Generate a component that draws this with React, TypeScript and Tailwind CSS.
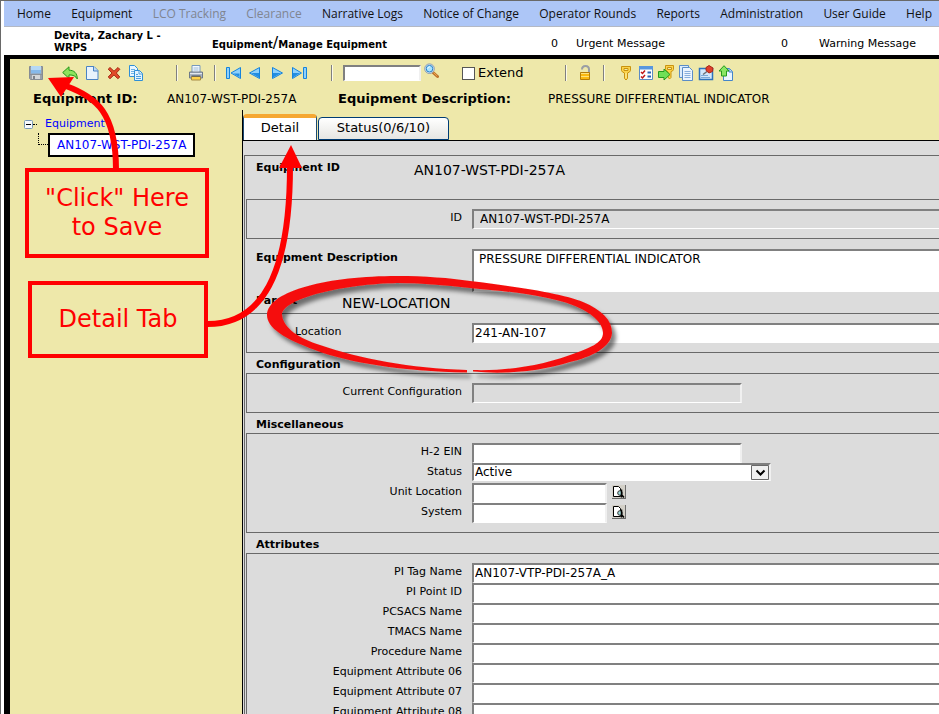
import React from "react";

type IconName =
  | "save" | "undo" | "new" | "delete" | "copy" | "print"
  | "first" | "prev" | "next" | "last" | "search" | "lock"
  | "key" | "checklist" | "keyArrow" | "docs" | "pin" | "export" | "lookup";

const blueStroke = { fill: "#8ed0fb", stroke: "#1583dc", strokeWidth: 1, strokeLinejoin: "round" as const };

const drawings: Record<IconName, React.ReactNode> = {
  save: (
    <>
      <path d="M1.500 1.500h13v13h-12l-1-1z" fill="#9aa0a8" stroke="#858b94" />
      <path d="M3 1h10v7H3z" fill="#b5d8f6" />
      <path d="M3 5h10v3.500H3z" fill="#86b9ea" />
      <path d="M2 9.500h12" stroke="#8b9097" />
      <path d="M4 10h8v4H4z" fill="#d3d6d9" />
      <path d="M5 11h2v3H5z" fill="#7d8289" />
    </>
  ),
  undo: (
    <path d="M.7 7.500 7 1.800v3.400c5 0 8.300 2.800 8.300 8.800-1.500-2.600-3.800-4.200-8.300-4.100v3.500z" fill="#8ee35c" stroke="#25961a" strokeLinejoin="round" />
  ),
  new: (
    <>
      <path d="M2.500 1.500h7.500l4 4v9H2.500z" fill="#e9f3fd" stroke="#4a83c4" />
      <path d="M9.500 1.500V6H14" fill="#bfdaf5" stroke="#4a83c4" />
    </>
  ),
  delete: (
    <path d="m4 2.500 4 3.700 4-3.700 1.800 1.800L10.300 8l3.500 4-2 1.700L8 9.900 4 13.700 2.200 12 6 8 2.200 4.200z" fill="#e24a2a" stroke="#a82a14" />
  ),
  copy: (
    <>
      <path d="M1.500.5h5l3 3v8h-8z" fill="#e9f6ff" stroke="#2f8fd6" />
      <path d="M3 4.500h4M3 6.500h4M3 8.500h3" stroke="#6db2e6" />
      <path d="M6.500 5.500h5l3 3v7h-8z" fill="#e3f3ff" stroke="#2f8fd6" />
      <path d="M11 5.500V9h3.500M8 9.500h2M8 11.500h5M8 13.500h5" stroke="#4f9fdb" fill="none" />
    </>
  ),
  print: (
    <>
      <path d="M4 .5h8v7H4z" fill="#f3f9ff" stroke="#7598bd" />
      <path d="M5.500 3h5M5.500 5h5" stroke="#9dbad7" />
      <path d="M1.500 7h13v6h-13z" fill="#a9b4c2" stroke="#6d7989" />
      <path d="M2 8.500h12" stroke="#e2e7ee" />
      <path d="M3.500 11.500h9v3.500h-9z" fill="#ffd24a" stroke="#a58a44" />
      <path d="M3.500 11h9" stroke="#455163" />
    </>
  ),
  first: (
    <>
      <path d="M1.500 2.500h3v11h-3z" {...blueStroke} />
      <path d="M15.500 2.500v11L6 8z" {...blueStroke} />
      <path d="M14.500 8.500v3.500L8 8.500z" fill="#218de2" />
    </>
  ),
  prev: (
    <>
      <path d="M12.500 2.500v11L2.500 8z" {...blueStroke} />
      <path d="M12 8v4.500L4 8z" fill="#218de2" />
    </>
  ),
  next: (
    <>
      <path d="M3.500 2.500v11l10-5.500z" {...blueStroke} />
      <path d="M4 8v4.500L12 8z" fill="#218de2" />
    </>
  ),
  last: (
    <>
      <path d="M1.500 2.500v11L10.500 8z" {...blueStroke} />
      <path d="M2 8v4.500L9 8z" fill="#218de2" />
      <path d="M12.500 2.500h3v11h-3z" {...blueStroke} />
    </>
  ),
  search: (
    <>
      <path d="m10 9.500 4.500 4" stroke="#bd742c" strokeWidth="3" strokeLinecap="round" />
      <path d="m10.500 9.500 3.700 3.500" stroke="#f1a94f" strokeWidth="1" />
      <circle cx="6.500" cy="5.700" r="4.800" fill="#d8e5f1" stroke="#8a9db4" />
      <circle cx="6.500" cy="5.700" r="3.300" fill="#a9e3ff" stroke="#2584cb" />
      <path d="M4.800 5.500c.2-1.200 1-1.700 2-1.700" stroke="#fff" fill="none" />
    </>
  ),
  lock: (
    <>
      <path d="M5 4.500C5 1.800 6.500 1 8.500 1s3.500 1 3.500 3.500V8" fill="none" stroke="#9a9ea4" strokeWidth="2" />
      <path d="M3.500 7.500h9v7h-9z" fill="#fbb90f" stroke="#b57d08" />
      <path d="M4 8.500h8M4 11.500h8" stroke="#ffe27a" />
    </>
  ),
  key: (
    <>
      <path d="M3.500 1.500h9v4l-1 1.500-2 1v5.500L8 15l-1.500-1.500V8l-2-1-1-1.500z" fill="#fbd44c" stroke="#c9930f" />
      <path d="M6 3.500h4v2H6z" fill="#eee8aa" stroke="#c9930f" />
      <path d="M8 8v5" stroke="#fff1a8" />
    </>
  ),
  checklist: (
    <>
      <path d="M1.500 1.500h13v13h-13z" fill="#fff" stroke="#5b8ac5" />
      <path d="M1 1h14v3.500H1z" fill="#5796de" />
      <path d="m3 7 1.500 1.500L7 5.500M3 11.500 4.500 13 7 10" fill="none" stroke="#c01818" strokeWidth="1.500" />
      <path d="M9.500 7.500h3.500M9.500 11.500h3.500" stroke="#2c63b3" strokeWidth="2" />
    </>
  ),
  keyArrow: (
    <>
      <path d="M7.500.5h8v4l-1 1.500-1.500.5v6L11.500 14 10 12V7L8.500 6l-1-1.500z" fill="#fbd44c" stroke="#c9930f" />
      <path d="M9.500 2.500h4v2h-4z" fill="#eee8aa" stroke="#c9930f" />
      <path d="M.5 6.500H6V4l6 5.500L6 15v-2.500H.5z" fill="#6fe057" stroke="#249a1d" />
    </>
  ),
  docs: (
    <>
      <path d="M1.500.5h9v12h-9z" fill="#dcecfb" stroke="#5b8dc7" />
      <path d="M4.500 2.500h7l3 3v10h-10z" fill="#eaf4fe" stroke="#5b8dc7" />
      <path d="M6.500 6.500h6M6.500 8.500h6M6.500 10.500h6M6.500 12.500h6" stroke="#88afdc" />
    </>
  ),
  pin: (
    <>
      <path d="M1.500 3.500h13v11h-13z" fill="#d3e8fb" stroke="#2e72bd" strokeWidth="1.500" />
      <path d="M3 12.500h9M3 10.500h7" stroke="#7ba9d8" />
      <path d="m5 9.500 4-3" stroke="#6a7078" strokeWidth="1.500" />
      <path d="m8 2.500 3-2 4 2.500-.5 3.500-3.500 1.500-3-2.500z" fill="#e03f2b" stroke="#a82516" />
    </>
  ),
  export: (
    <>
      <path d="M5.500 3.500h6l3 3v9h-9z" fill="#e9f4fe" stroke="#4485ca" />
      <path d="M11 3.500V7h3.500" fill="#bcd9f4" stroke="#4485ca" />
      <path d="M6 .7 11 6H8.500v5h-5V6H1z" fill="#8ae663" stroke="#249a1d" />
    </>
  ),
  lookup: (
    <>
      <path d="M0 0h14v14H0z" fill="#d3d0c8" />
      <path d="M13.500 0v14M0 13.500h14" fill="none" stroke="#6b6b6b" />
      <path d="M1.500 1.500h5l2 2v8h-7z" fill="#fff" stroke="#000" />
      <circle cx="8" cy="8" r="2.300" fill="#9fd9d9" stroke="#333" />
      <path d="M9.500 4.500v8M9.500 9.500l2.500 3" stroke="#000" strokeWidth="1.500" />
    </>
  ),
};

function Icon({ name }: { name: IconName }) {
  const box = name === "lookup" ? "0 0 14 14" : "0 0 16 16";
  return (
    <svg viewBox={box} className="block size-full" fill="none" aria-hidden="true">
      {drawings[name]}
    </svg>
  );
}

function Tool({ name, label, className = "" }: { name: IconName; label: string; className?: string }) {
  return (
    <button type="button" aria-label={label} className={`size-4 shrink-0 ${className}`}>
      <Icon name={name} />
    </button>
  );
}

function Divider({ className = "" }: { className?: string }) {
  return <span className={`h-4 w-0.5 shrink-0 border-r border-[#fbf9e8] bg-[#808080] ${className}`} />;
}

const menu = [
  { text: "Home" },
  { text: "Equipment" },
  { text: "LCO Tracking", off: true },
  { text: "Clearance", off: true },
  { text: "Narrative Logs" },
  { text: "Notice of Change" },
  { text: "Operator Rounds" },
  { text: "Reports" },
  { text: "Administration" },
  { text: "User Guide" },
  { text: "Help" },
];

const sunken = "border-t-2 border-l-2 border-t-[#808080] border-l-[#808080] border-b border-b-white";
const closed = "border-r-2 border-r-[#f0f0f0]";

function Row({ id, label, children }: { id: string; label: string; children: React.ReactNode }) {
  return (
    <div className="flex h-5 items-start">
      <label htmlFor={id} className="mr-[10px] w-[215px] shrink-0 pt-px text-right leading-4">
        {label}
      </label>
      {children}
    </div>
  );
}

function Field({ id, value = "", className }: { id: string; value?: string; className: string }) {
  return <input id={id} defaultValue={value} className={`h-5 min-w-0 px-px pb-0.5 text-[12px] ${sunken} ${className}`} />;
}

function Group({ children }: { children: React.ReactNode }) {
  return <div className="border-y border-l border-[#696969] py-[9px]">{children}</div>;
}

function Heading({ children }: { children: React.ReactNode }) {
  return <h2 className="h-5 pl-[10px] pt-0.5 font-bold leading-5">{children}</h2>;
}

function DetailForm() {
  return (
    <form className="mt-[14px] ml-px border-t border-l border-[#696969] pl-px">
      <div className="flex h-[43px] pl-[10px]">
        <h2 className="w-[158px] pt-1 font-bold leading-4">Equipment ID</h2>
        <p className="pt-[6px] text-[14px] leading-4">AN107-WST-PDI-257A</p>
      </div>
      <Group>
        <Row id="equipment-id" label="ID">
          <input id="equipment-id" readOnly defaultValue="AN107-WST-PDI-257A" className={`h-5 min-w-0 flex-1 bg-[#dcdcdc] px-[6px] pb-0.5 text-[12px] ${sunken}`} />
        </Row>
      </Group>
      <div className="flex h-[52px] items-start pl-[10px] pt-[10px]">
        <label htmlFor="description" className="w-[216px] shrink-0 pt-px font-bold leading-4">
          Equipment Description
        </label>
        <textarea id="description" defaultValue="PRESSURE DIFFERENTIAL INDICATOR" className={`h-[43px] min-w-0 flex-1 resize-none overflow-hidden bg-white px-[5px] text-[12px] leading-4 ${sunken}`} />
      </div>
      <div className="flex h-[22px] pl-[10px]">
        <h2 className="w-[86px] pt-0.5 font-bold leading-4">Parent</h2>
        <p className="pt-1 text-[14px] leading-4">NEW-LOCATION</p>
      </div>
      <Group>
        <div className="flex h-5 items-start">
          <label htmlFor="location" className="w-[225px] shrink-0 pt-px pl-12 leading-4">
            Location
          </label>
          <Field id="location" value="241-AN-107" className="flex-1 bg-white" />
        </div>
      </Group>
      <Heading>Configuration</Heading>
      <Group>
        <Row id="configuration" label="Current Configuration">
          <Field id="configuration" className={`w-[270px] bg-[#dcdcdc] ${closed}`} />
        </Row>
      </Group>
      <Heading>Miscellaneous</Heading>
      <Group>
        <Row id="ein" label="H-2 EIN">
          <Field id="ein" className={`w-[270px] bg-white ${closed}`} />
        </Row>
        <Row id="status" label="Status">
          <div className="relative w-[299px]">
            <select id="status" className={`block h-[18px] w-full appearance-none bg-white px-px text-[12px] leading-[15px] ${sunken} ${closed}`}>
              <option>Active</option>
            </select>
            <svg viewBox="0 0 18 15" className="pointer-events-none absolute top-0.5 right-0.5 h-[15px] w-[18px]" fill="none" aria-hidden="true">
              <path d="M.5.5h17v14H.5z" fill="#f0f0f0" stroke="#696969" />
              <path d="m5.500 5.500 4 4 4-4" stroke="#000" strokeWidth="2" />
            </svg>
          </div>
        </Row>
        {["Unit Location", "System"].map((name) => (
          <Row key={name} id={name} label={name}>
            <Field id={name} className={`w-[135px] bg-white ${closed}`} />
            <button type="button" aria-label={`Look up ${name}`} className="mt-0.5 ml-[5px] size-[14px]">
              <Icon name="lookup" />
            </button>
          </Row>
        ))}
      </Group>
      <Heading>Attributes</Heading>
      <Group>
        {["PI Tag Name", "PI Point ID", "PCSACS Name", "TMACS Name", "Procedure Name", "Equipment Attribute 06", "Equipment Attribute 07", "Equipment Attribute 08"].map((name) => (
          <Row key={name} id={name} label={name}>
            <Field id={name} value={name === "PI Tag Name" ? "AN107-VTP-PDI-257A_A" : ""} className="flex-1 bg-white" />
          </Row>
        ))}
      </Group>
    </form>
  );
}

/* Red arrows, callouts and the hand-drawn ring laid over the screen. */
function Annotations() {
  return (
    <div className="pointer-events-none absolute -top-px right-0 bottom-0 -left-px text-[24px] leading-[29px] text-[#ff0000]">
      <svg viewBox="0 0 640 400" className="absolute top-0 left-0 h-[400px] w-[640px]" fill="none" aria-hidden="true">
        <defs>
          <filter id="ring-shadow" x="-10%" y="-10%" width="120%" height="130%">
            <feDropShadow dx="4" dy="5" stdDeviation="2" floodColor="#000" floodOpacity="0.5" />
          </filter>
        </defs>
        <path
          filter="url(#ring-shadow)"
          fill="#f5100b"
          d="M467 372.500C400 371 350 363 315 350C285 339 267 328 267 315C268 290 330 276 397 276C425 276 450 278 470 281C520 287 565 294 583 302C602 310 612 320 612 333C611 347 592 357 570 362C545 370 510 375 473 371.500L473 370C505 371 540 366 570 355C590 348 603 343 603 333C603 322 590 312 575 306C545 294 500 291 470 288C445 285 420 283 397 283C345 284 282 298 282 315C283 328 300 339 320 345C360 359 410 368 467 370Z"
        />
        <path d="M66 86C96 97 116 112 116 170" stroke="#f00" strokeWidth="6" />
        <path d="M48 78 74 77 61 97Z" fill="#f00" />
        <path d="M206 324C262 325 290 274 290 166" stroke="#f00" strokeWidth="6" />
        <path d="M291 145 279 168h23z" fill="#f00" />
      </svg>
      <div className="absolute top-[168px] left-[25px] flex h-[90px] w-[184px] items-center justify-center border-4 border-[#ff0000] text-center">
        <p>
          "Click" Here
          <br />
          to Save
        </p>
      </div>
      <div className="absolute top-[281px] left-[28px] flex h-[77px] w-[180px] items-center justify-center border-4 border-[#ff0000]">
        <p>Detail Tab</p>
      </div>
    </div>
  );
}

export default function App() {
  return (
    <div className="relative flex h-screen flex-col overflow-hidden border-t border-l border-[#696969] bg-white pl-[3px] font-['DejaVu_Sans',Verdana,sans-serif] text-[11px] text-black">
      <nav className="flex h-[26px] shrink-0 items-center justify-between border-b border-[#b4b9c4] bg-[#adc6f7] pr-[7px] pl-[13px] font-['Open_Sans','Noto_Sans',sans-serif] text-[12px] leading-4 whitespace-nowrap">
        {menu.map((item) => (
          <a key={item.text} href="#" className={item.off ? "text-[#808590]" : "text-[#111]"}>
            {item.text}
          </a>
        ))}
      </nav>

      <header className="flex h-[28px] shrink-0 whitespace-nowrap">
        <p className="ml-[50px] w-[158px] pt-[3px] text-[10px] font-bold leading-3">
          Devita, Zachary L -<br />
          WRPS
        </p>
        <h1 className="flex-1 text-[10px] font-bold leading-[32px]">
          Equipment<span className="text-[16px] font-normal">/</span>Manage Equipment
        </h1>
        <p className="w-[230px] leading-[33px]">
          <span className="mr-[18px]">0</span>Urgent Message
        </p>
        <p className="w-[158px] leading-[33px]">
          <span className="mr-[31px]">0</span>Warning Message
        </p>
      </header>

      <main className="flex min-h-0 flex-1 flex-col border-t-4 border-l-[6px] border-black bg-[#eee8aa]">
        <div className="flex h-7 shrink-0 items-center pl-[18px]">
          <Tool name="save" label="Save" />
          <Tool name="undo" label="Undo" className="ml-[18px]" />
          <Tool name="new" label="New" className="ml-1.5" />
          <Tool name="delete" label="Delete" className="ml-1.5" />
          <Tool name="copy" label="Copy" className="ml-1.5" />
          <Divider className="ml-8" />
          <Tool name="print" label="Print" className="ml-[10px]" />
          <Divider className="ml-[10px]" />
          <Tool name="first" label="First" className="ml-[9px]" />
          <Tool name="prev" label="Previous" className="ml-1.5" />
          <Tool name="next" label="Next" className="ml-1.5" />
          <Tool name="last" label="Last" className="ml-1.5" />
          <Divider className="ml-6" />
          <input aria-label="Find" className={`ml-[10px] h-4 w-[78px] bg-white px-px ${sunken} ${closed}`} />
          <Tool name="search" label="Search" className="mb-1 ml-0.5" />
          <label className="ml-[23px] flex w-[103px] items-center gap-[3px] text-[13px] leading-4">
            <input type="checkbox" className="size-[13px] appearance-none border border-[#555] bg-white" />
            Extend
          </label>
          <Divider />
          <Tool name="lock" label="Unlock" className="ml-[10px]" />
          <Divider className="ml-[10px]" />
          <div className="ml-[13px] flex gap-1">
            <Tool name="key" label="Key" />
            <Tool name="checklist" label="Checklist" />
            <Tool name="keyArrow" label="Transfer key" />
            <Tool name="docs" label="Documents" />
            <Tool name="pin" label="Pin" />
            <Tool name="export" label="Export" />
          </div>
        </div>

        <div className="flex h-[23px] shrink-0 items-center pt-px pl-[23px] leading-4 whitespace-nowrap">
          <strong className="w-[134px] text-[13px]">Equipment ID:</strong>
          <span className="w-[171px] text-[12px]">AN107-WST-PDI-257A</span>
          <strong className="w-[210px] text-[13px]">Equipment Description:</strong>
          <span className="text-[12px]">PRESSURE DIFFERENTIAL INDICATOR</span>
        </div>

        <div className="flex min-h-0 flex-1">
          <aside className="w-[233px] shrink-0 border-r border-black pt-[6px] pl-[14px] text-[#0000ff]">
            <div className="flex h-4 items-center">
              <button type="button" aria-label="Collapse Equipment" className="size-[9px]">
                <svg viewBox="0 0 9 9" className="block size-full" fill="none" aria-hidden="true">
                  <rect x=".5" y=".5" width="8" height="8" rx="1" fill="#f7f9fc" stroke="#7898b5" />
                  <path d="M2 4.500h5" stroke="#000" />
                </svg>
              </button>
              <span className="mr-2 w-1 border-t border-dotted border-black" />
              <a href="#">Equipment</a>
            </div>
            <div className="flex pt-px pl-[14px]">
              <span className="h-3 w-[10px] border-b border-l border-dotted border-black" />
              <a href="#" className="flex h-6 items-center border-2 border-black bg-white px-[7px] text-[12px]">
                AN107-WST-PDI-257A
              </a>
            </div>
          </aside>

          <section className="flex min-w-0 flex-1 flex-col">
            <div role="tablist" className="flex h-[31px] shrink-0 items-end gap-px border-b border-black text-[13px] leading-4">
              <button type="button" role="tab" aria-selected="true" className="h-[26px] w-[74px] rounded-t-[4px] border-x border-t-4 border-x-[#1c4a72] border-t-[#f5a732] bg-white pb-0.5">
                Detail
              </button>
              <button type="button" role="tab" aria-selected="false" className="h-[23px] w-[131px] rounded-t-[4px] border border-[#003c74] bg-linear-to-b from-white to-[#e6e6e2] pb-0.5">
                Status(0/6/10)
              </button>
            </div>
            <div className="min-h-0 flex-1 overflow-hidden bg-[#dcdcdc]">
              <DetailForm />
            </div>
          </section>
        </div>
      </main>
      <Annotations />
    </div>
  );
}
